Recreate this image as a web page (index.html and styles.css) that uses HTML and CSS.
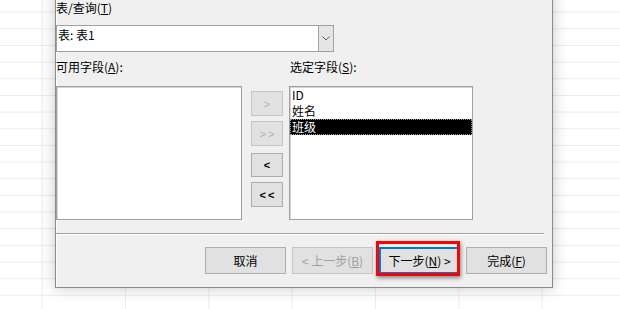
FILE: index.html
```html
<!DOCTYPE html>
<html lang="zh-CN">
<head>
<meta charset="utf-8">
<link rel="stylesheet" href="styles.css">
</head>
<body>
<div class="sheet">
  <div class="dialog">
    <div class="label">表/查询(<u>T</u>)</div>
    <div class="combo">
      <div class="combo-text">表: 表1</div>
      <div class="combo-btn">
        <svg width="8" height="5" viewBox="0 0 8 5"><polyline points="0.5,0.5 4,4 7.5,0.5" fill="none" stroke="#606060" stroke-width="1"/></svg>
      </div>
    </div>
    <div class="cols labels">
      <div class="label">可用字段(<u>A</u>):</div>
      <div></div>
      <div class="label pad1">选定字段(<u>S</u>):</div>
    </div>
    <div class="cols lists">
      <div class="listbox left"></div>
      <div class="movers">
        <div class="mbtn disabled">&gt;</div>
        <div class="mbtn disabled spaced">&gt;&gt;</div>
        <div class="mbtn third">&lt;</div>
        <div class="mbtn spaced">&lt;&lt;</div>
      </div>
      <div class="listbox right">
        <div class="item">ID</div>
        <div class="item">姓名</div>
        <div class="item sel">班级</div>
      </div>
    </div>
    <div class="sep"></div>
    <div class="actions">
      <div class="btn">取消</div>
      <div class="btn disabled">&lt; 上一步(<u>B</u>)</div>
      <div class="btn default">下一步(<u>N</u>) &gt;<span class="callout"></span></div>
      <div class="btn">完成(<u>F</u>)</div>
    </div>
  </div>
</div>
</body>
</html>
```
FILE: styles.css
```css
html, body {
  margin: 0;
  padding: 0;
  width: 620px;
  height: 309px;
  overflow: hidden;
  background: #fff;
}
.sheet {
  position: relative;
  width: 620px;
  height: 309px;
  overflow: hidden;
  background-color: #fff;
  background-image:
    linear-gradient(to bottom, #ececec 1px, transparent 1px),
    linear-gradient(to right, #ececec 1px, transparent 1px);
  background-size: 83.33px 16.67px;
  background-position: 41.67px 11.67px;
  font-family: "Noto Sans CJK SC", "Noto Sans", sans-serif;
  font-size: 12px;
  color: #000;
}
.dialog {
  position: absolute;
  left: 55px;
  top: -19px;
  width: 498px;
  height: 307px;
  box-sizing: border-box;
  border: 1px solid #8a8a8a;
  background: #f0f0f0;
  padding-top: 18px;
  box-shadow: inset 1px 1px 0 #fff, 0 0 14px rgba(0, 0, 0, 0.22);
}
.label {
  line-height: 15px;
  white-space: nowrap;
}
.pad1 { padding-left: 1px; }
.combo {
  margin-top: 10px;
  width: 278px;
  height: 27px;
  box-sizing: border-box;
  border: 1px solid #a0a0a0;
  background: #fff;
  display: flex;
}
.combo-text {
  flex: 1;
  padding: 1px 0 0 1px;
  line-height: 16px;
}
.combo-btn {
  width: 14px;
  background: #e5e5e5;
  border-left: 1px solid #a0a0a0;
  display: flex;
  align-items: center;
  justify-content: center;
}
.cols {
  display: grid;
  grid-template-columns: 195px 38px 184px;
}
.labels { margin-top: 7px; }
.lists {
  margin-top: 12px;
  height: 134px;
}
.listbox {
  height: 134px;
  box-sizing: border-box;
  border: 1px solid #a0a0a0;
  background: #fff;
  box-shadow: inset 1px 1px 0 #d4d4d4;
}
.listbox.left { width: 186px; }
.listbox.right { width: 184px; }
.item {
  height: 16px;
  line-height: 16px;
  padding-left: 2px;
  box-sizing: border-box;
}
.item.sel {
  background: #000;
  color: #fff;
  border: 1px dotted #9a9a9a;
  line-height: 14px;
  padding-left: 1px;
}
.movers {
  width: 32px;
  padding-top: 5px;
  display: flex;
  flex-direction: column;
  gap: 5px;
}
.mbtn {
  height: 25px;
  box-sizing: border-box;
  border: 1px solid #adadad;
  background: #e1e1e1;
  display: flex;
  align-items: center;
  justify-content: center;
  font: bold 11px "Liberation Sans", sans-serif;
  color: #000;
}
.mbtn.third {
  margin-top: 2px;
  height: 24px;
}
.mbtn.spaced { letter-spacing: 2px; padding-left: 2px; }
.mbtn.disabled {
  color: #b0b0b0;
  font-weight: normal;
  border-color: #c4c4c4;
}
.sep {
  margin-top: 13px;
  width: 488px;
  height: 1px;
  background: #a0a0a0;
  border-bottom: 1px solid #fff;
}
.actions {
  margin-top: 12px;
  display: flex;
  justify-content: flex-end;
  gap: 6px;
  padding-right: 5px;
}
.btn {
  position: relative;
  width: 81px;
  height: 27px;
  box-sizing: border-box;
  border: 1px solid #adadad;
  background: #e1e1e1;
  display: flex;
  align-items: center;
  justify-content: center;
  line-height: 16px;
  white-space: nowrap;
}
.btn.disabled {
  color: #a0a0a0;
  border-color: #c4c4c4;
}
.btn.default {
  border: 2px solid #0078d7;
}
.callout {
  position: absolute;
  left: -5px;
  right: -2px;
  top: -8px;
  bottom: -4px;
  border: 3px solid #f00;
  box-shadow: 1px 2px 4px rgba(0, 0, 0, 0.45);
  pointer-events: none;
}
```
